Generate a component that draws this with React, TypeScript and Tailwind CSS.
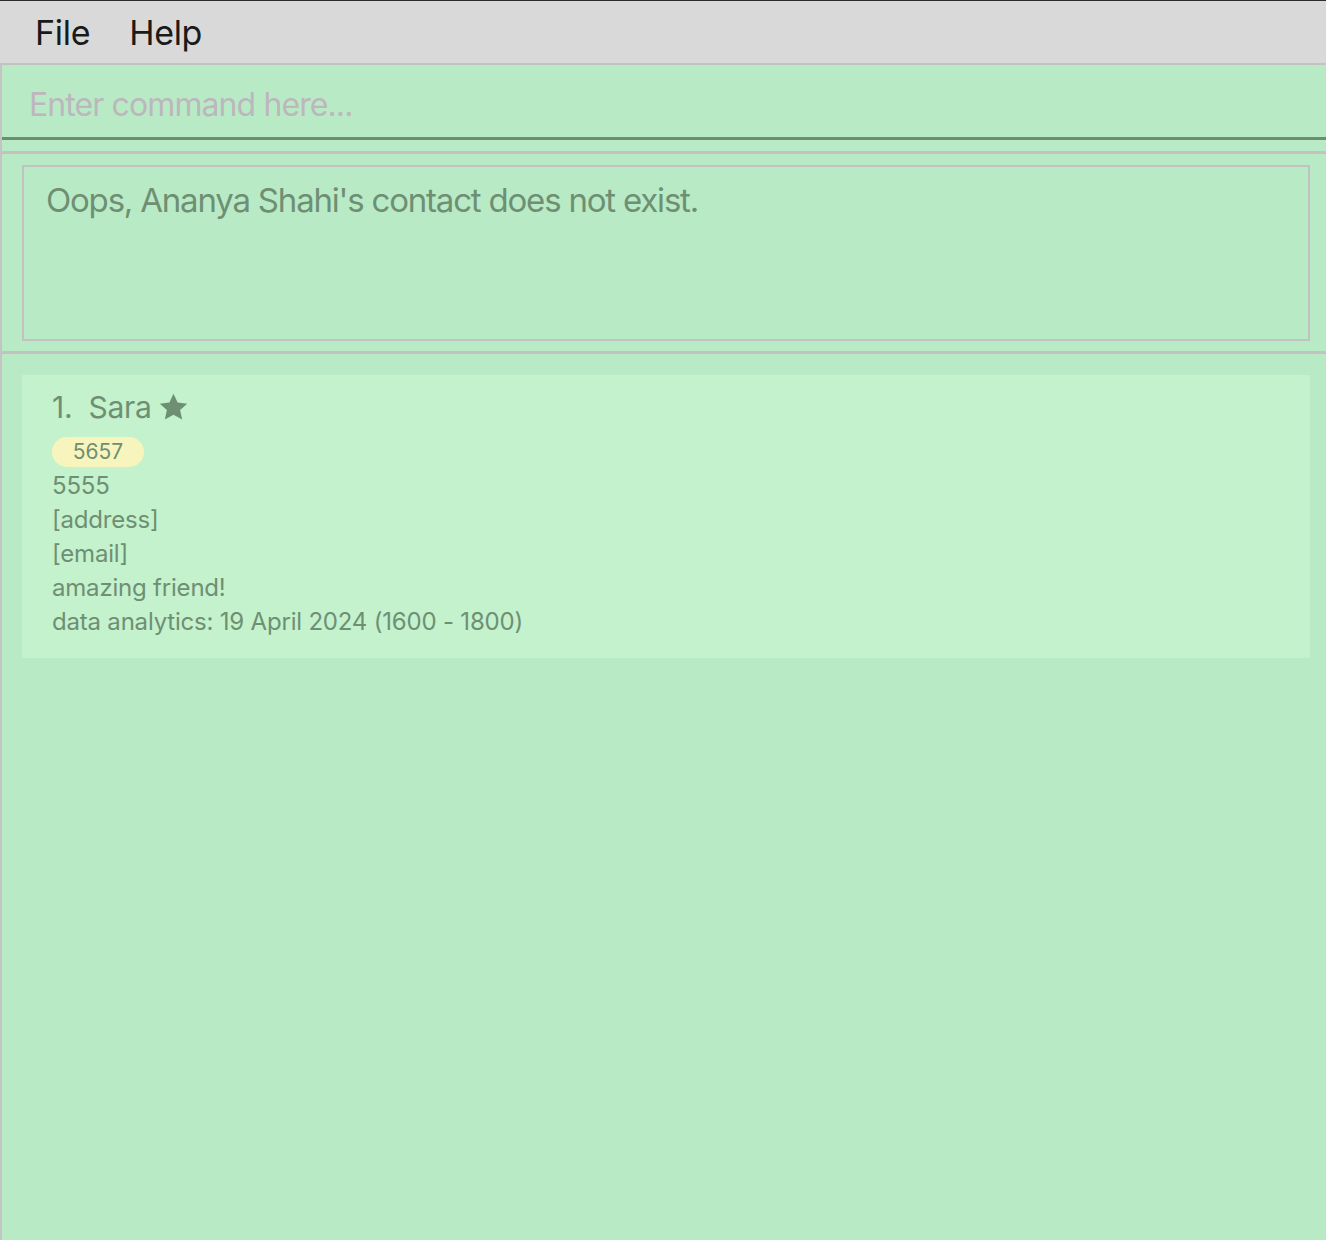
import React from 'react';

const font = { fontFamily: 'Inter, "Noto Sans", sans-serif' };

const Star = () => (
  <svg viewBox="0 0 24 24" className="ml-[5px] h-[33px] w-[33px]" fill="#6f8f74">
    <path d="M12 2l3 6.4 7 .8-5.2 4.7 1.5 6.9L12 17.3l-6.3 3.5 1.5-6.9L2 9.2l7-.8z" />
  </svg>
);

const PersonCard = () => {
  const lines = ['5555', '[address]', '[email]', 'amazing friend!', 'data analytics: 19 April 2024 (1600 - 1800)'];

  return (
    <div className="mx-[20px] mr-[16px] bg-[#c3f2cc] pb-[19px] pl-[30px] pt-[12px] text-[#6f8f74]">
      <div className="flex items-center text-[30px] leading-[40px] tracking-[-0.3px]">
        <span className="whitespace-pre">1.  Sara</span>
        <Star />
      </div>
      <div className="mt-[10px] flex">
        <span className="flex h-[30px] w-[92px] items-center justify-center rounded-full bg-[#f7f5bd] text-[21px]">
          5657
        </span>
      </div>
      <div className="mt-[2px]">
        {lines.map((line) => (
          <div key={line} className="text-[24px] leading-[34px] tracking-[-0.2px]">
            {line}
          </div>
        ))}
      </div>
    </div>
  );
};

export default function App() {
  return (
    <div className="flex h-[1240px] w-full flex-col overflow-hidden bg-[#b8ebc5]" style={font}>
      {/* menu bar */}
      <div className="flex h-[65px] shrink-0 items-center border-b-2 border-t border-b-[#c2c2c2] border-t-[#2b2b2b] bg-[#d9d9d9] pl-[35px] text-[34px] text-[#1a1a1a]">
        <span className="mr-[39px] tracking-[-0.3px]">File</span>
        <span className="tracking-[-0.3px]">Help</span>
      </div>

      <div className="flex flex-1 flex-col border-l-2 border-[#c4c4c4]">
        {/* command box */}
        <div className="flex h-[75px] items-center border-b-[3px] border-[#6b8e6f] pl-[27px] pt-[8px] text-[32px] tracking-[-0.9px] text-[#bdb6bd]">
          Enter command here...
        </div>

        <div className="mt-[11px] h-[3px] bg-[#c2c2c2]" />

        {/* result display */}
        <div className="mx-[20px] mr-[16px] mt-[11px] h-[176px] border-2 border-[#c2c2c2] pl-[22px] pt-[13px] text-[33px] leading-[40px] tracking-[-1.2px] text-[#6f8f74]">
          Oops, Ananya Shahi's contact does not exist.
        </div>

        <div className="mt-[10px] h-[3px] bg-[#c2c2c2]" />

        <div className="mt-[21px]">
          <PersonCard />
        </div>
      </div>
    </div>
  );
}
